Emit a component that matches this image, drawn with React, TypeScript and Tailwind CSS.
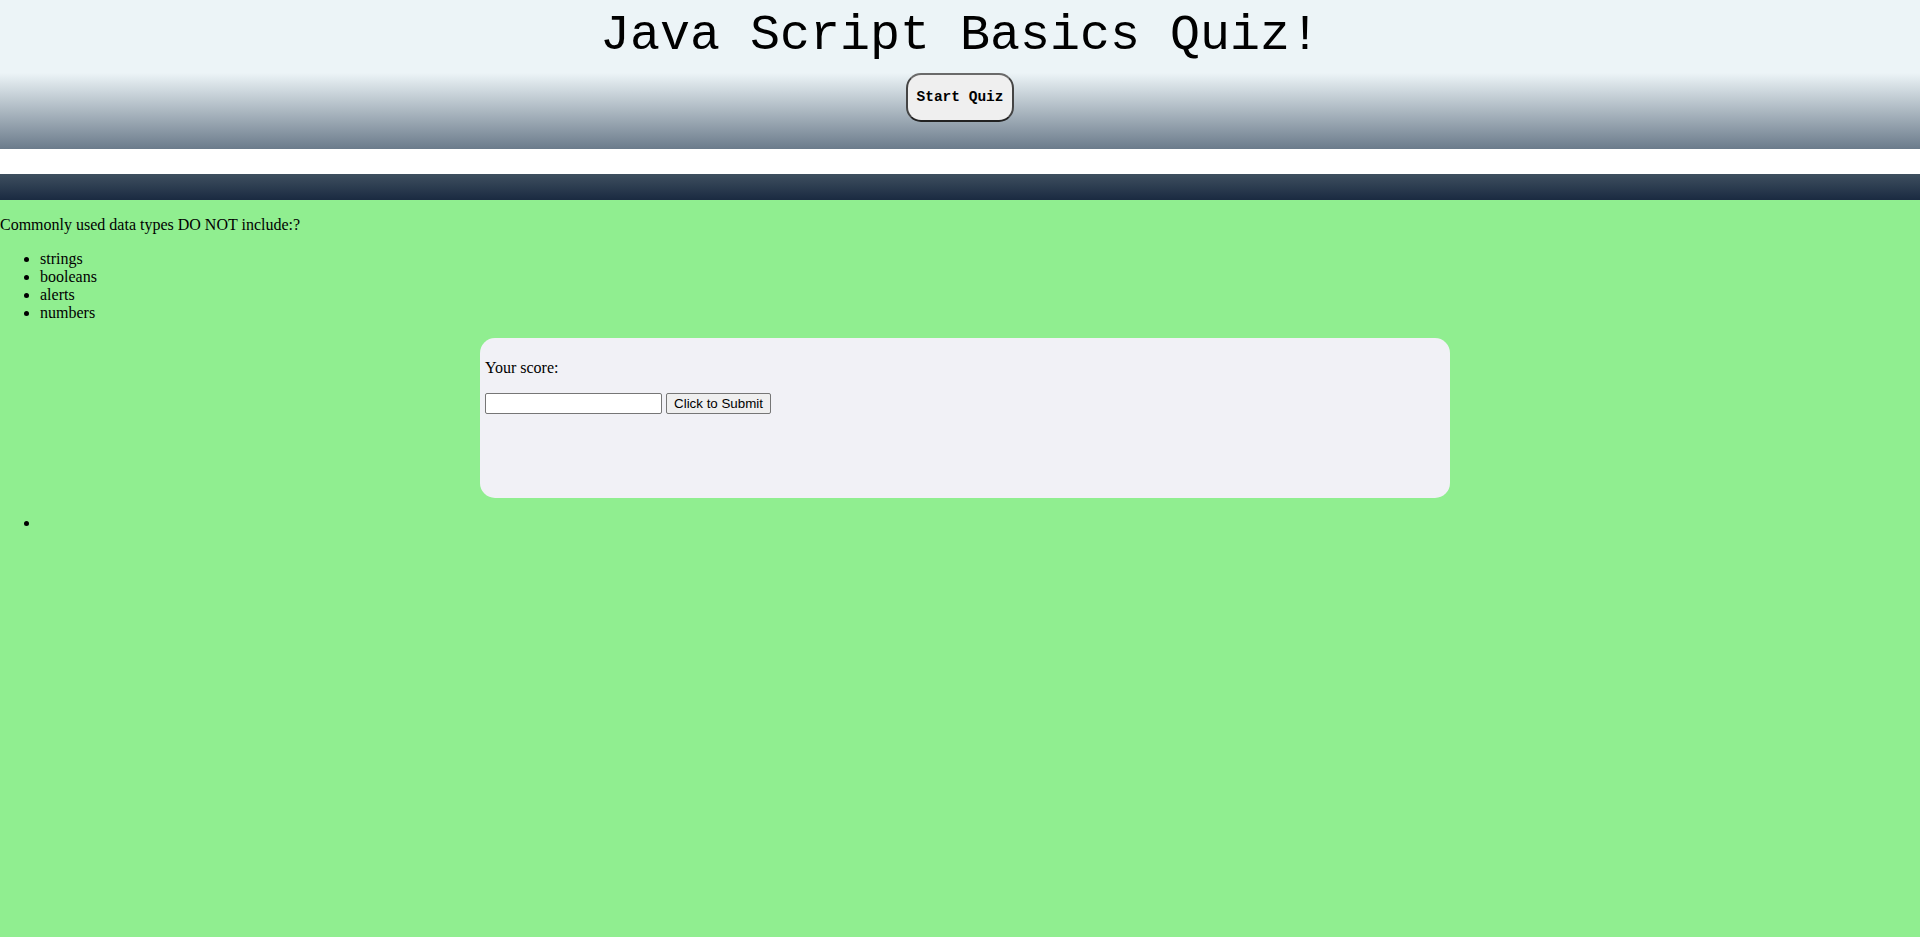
export default function App() {
  return (
    <div className="min-h-[937px] bg-[#90ee90] text-black" style={{ fontFamily: '"Liberation Serif", "Times New Roman", serif' }}>
      <header className="h-[149px] bg-[linear-gradient(to_bottom,#ecf4f7_49%,#6b7b8b_100%)] flex flex-col items-center">
        <h1 className="mt-[8px] text-[50px] leading-[55px] font-normal" style={{ fontFamily: '"Liberation Mono", "Courier New", monospace' }}>
          Java Script Basics Quiz!
        </h1>
        <button className="mt-[10px] w-[108px] h-[49px] rounded-[15px] border-2 border-t-[#6a6a6a] border-x-[#444] border-b-[#222] bg-[#efefef] text-[14.5px] font-bold text-black" style={{ fontFamily: '"Liberation Mono", "Courier New", monospace' }}>
          Start Quiz
        </button>
      </header>
      <div className="h-[25px] bg-white" />
      <div className="h-[26px] bg-[linear-gradient(to_bottom,#3e4f5f,#1a2a41)]" />
      <main className="flow-root text-[16px] leading-[18px]">
        <p className="mt-[16px]">Commonly used data types DO NOT include:?</p>
        <ul className="list-disc pl-[40px] mt-[16px]">
          <li>strings</li>
          <li>booleans</li>
          <li>alerts</li>
          <li>numbers</li>
        </ul>
        <div className="mt-[16px] ml-[480px] w-[960px] h-[150px] box-content p-[5px] bg-[#f1f1f6] rounded-[15px] flow-root">
          <p className="mt-[16px]">Your score:</p>
          <div className="mt-[16px] flex items-center gap-[4px]">
            <input type="text" className="w-[177px] h-[21px] bg-white border border-[#767676] rounded-[2px] px-[2px] text-[13.33px]" />
            <button className="w-[105px] h-[21px] bg-[#efefef] border border-[#767676] rounded-[2px] text-[13.33px] leading-[15px] text-black" style={{ fontFamily: '"Liberation Sans", Arial, sans-serif' }}>
              Click to Submit
            </button>
          </div>
        </div>
        <ul className="list-disc pl-[40px] mt-[16px]">
          <li className="h-[18px]"></li>
        </ul>
      </main>
    </div>
  );
}
